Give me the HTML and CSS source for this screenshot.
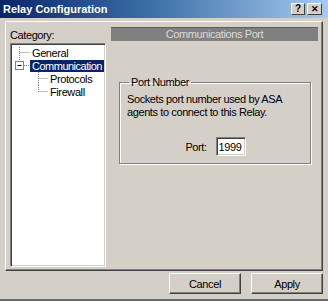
FILE: index.html
```html
<!DOCTYPE html>
<html lang="en">
<head>
  <meta charset="UTF-8" />
  <title>Relay Configuration</title>
  <link rel="stylesheet" href="styles.css">
</head>
<body>
  <div class="window">
    <div class="titlebar">
      <span class="title">Relay Configuration</span>
      <div class="caption-btns">
        <span class="cap-btn">?</span>
        <span class="cap-btn close">✕</span>
      </div>
    </div>

    <div class="panel">
      <div class="sidebar">
        <div class="cat-label">Category:</div>
        <div class="tree">
          <div class="row">
            <svg class="gutter" width="18" height="13">
              <path d="M7.5 1V13M7.5 6.5H18" stroke="#808080" stroke-dasharray="1 1" fill="none"/>
            </svg>
            <span class="node">General</span>
          </div>
          <div class="row">
            <svg class="gutter" width="18" height="13">
              <path d="M7.5 0V2M12 6.5H18" stroke="#808080" stroke-dasharray="1 1" fill="none"/>
              <rect x="3.5" y="2.5" width="8" height="8" fill="#fff" stroke="#808080"/>
              <path d="M5.5 6.5H9.5" stroke="#000"/>
            </svg>
            <span class="node selected">Communication</span>
          </div>
          <div class="row">
            <svg class="gutter" width="36" height="13">
              <path d="M26.5 0V13M26.5 6.5H36" stroke="#808080" stroke-dasharray="1 1" fill="none"/>
            </svg>
            <span class="node">Protocols</span>
          </div>
          <div class="row">
            <svg class="gutter" width="36" height="13">
              <path d="M26.5 0V7M26.5 6.5H36" stroke="#808080" stroke-dasharray="1 1" fill="none"/>
            </svg>
            <span class="node">Firewall</span>
          </div>
        </div>
      </div>

      <div class="content">
        <div class="page-header">Communications Port</div>
        <fieldset class="group">
          <legend>Port Number</legend>
          <p class="desc">Sockets port number used by ASA agents to connect to this Relay.</p>
          <div class="port-row">
            <label for="port">Port:</label>
            <input id="port" type="text" value="1999" />
          </div>
        </fieldset>
      </div>
    </div>

    <div class="footer">
      <button>Cancel</button>
      <button>Apply</button>
    </div>
  </div>
</body>
</html>
```

FILE: styles.css
```css
body {
  margin: 0;
  padding: 0;
  font-family: 'Liberation Sans', Arial, sans-serif;
  font-size: 11px;
  letter-spacing: -0.4px;
  color: #000;
  background: #d4d0c8;
}

.window {
  width: 328px;
  height: 301px;
  box-sizing: border-box;
  display: flex;
  flex-direction: column;
  border-bottom: 2px solid #6a6a6a;
  background: #d4d0c8;
}

.titlebar {
  height: 18px;
  display: flex;
  align-items: center;
  justify-content: space-between;
  padding: 0 6px 0 3px;
  background: linear-gradient(90deg, #0a246a, #3a6ea5 45%, #a6caf0);
}

.title {
  color: #fff;
  font-weight: bold;
  font-size: 11px;
  letter-spacing: 0;
}

.caption-btns {
  display: flex;
  gap: 2px;
}

.cap-btn {
  width: 14px;
  height: 12px;
  box-sizing: border-box;
  background: #d4d0c8;
  border-top: 1px solid #fff;
  border-left: 1px solid #fff;
  border-right: 1px solid #404040;
  border-bottom: 1px solid #404040;
  font-weight: bold;
  font-size: 10px;
  line-height: 10px;
  letter-spacing: 0;
  text-align: center;
}

.cap-btn.close {
  width: 15px;
  font-size: 9px;
}

.panel {
  margin: 3px 5px 0 5px;
  height: 250px;
  box-sizing: border-box;
  display: flex;
  gap: 5px;
  border-top: 1px solid #fff;
  border-left: 1px solid #fff;
  border-right: 1px solid #404040;
  border-bottom: 1px solid #404040;
  box-shadow: inset -1px -1px 0 #808080;
}

.sidebar {
  width: 100px;
  display: flex;
  flex-direction: column;
  padding: 7px 0 3px 4px;
  box-sizing: border-box;
}

.cat-label {
  line-height: 13px;
  margin-bottom: 1px;
}

.tree {
  flex: 1;
  background: #fff;
  border-top: 1px solid #808080;
  border-left: 1px solid #808080;
  border-right: 1px solid #fff;
  border-bottom: 1px solid #fff;
  box-shadow: inset 1px 1px 0 #404040, inset -1px -1px 0 #d4d0c8;
  padding: 2px 0 0 1px;
  overflow: hidden;
}

.row {
  display: flex;
  align-items: center;
  height: 13px;
}

.gutter {
  flex: none;
  display: block;
}

.node {
  padding: 0 2px;
  line-height: 12px;
  white-space: nowrap;
}

.node.selected {
  background: #0a246a;
  color: #fff;
  letter-spacing: -0.5px;
}

.content {
  flex: 1;
  padding: 5px 4px 0 0;
  display: flex;
  flex-direction: column;
}

.page-header {
  height: 13px;
  line-height: 13px;
  background: #808080;
  border-top: 1px solid #5e5e5e;
  color: #dcdad4;
  text-align: center;
}

.group {
  margin: 35px 7px 0 8px;
  padding: 0 6px 7px 7px;
  border: 1px solid #808080;
  box-shadow: 1px 1px 0 #fff, inset 1px 1px 0 #fff;
  min-width: 0;
}

.group legend {
  padding: 0 2px;
  margin-left: 2px;
  line-height: 13px;
}

.desc {
  margin: 4px 0 0 0;
  line-height: 13px;
  width: 170px;
}

.port-row {
  display: flex;
  justify-content: center;
  align-items: center;
  gap: 9px;
  margin-top: 18px;
}

.port-row input {
  width: 30px;
  height: 19px;
  box-sizing: border-box;
  font-family: inherit;
  font-size: 11px;
  letter-spacing: -0.4px;
  padding: 0 2px;
  background: #fff;
  border-top: 1px solid #808080;
  border-left: 1px solid #808080;
  border-right: 1px solid #fff;
  border-bottom: 1px solid #fff;
  box-shadow: inset 1px 1px 0 #404040, inset -1px -1px 0 #d4d0c8;
  outline: none;
}

.footer {
  display: flex;
  justify-content: flex-end;
  gap: 10px;
  padding: 2px 5px 0 0;
}

.footer button {
  width: 72px;
  height: 21px;
  font-family: inherit;
  font-size: 11px;
  letter-spacing: -0.4px;
  color: #000;
  background: #d4d0c8;
  border-top: 1px solid #fff;
  border-left: 1px solid #fff;
  border-right: 1px solid #404040;
  border-bottom: 1px solid #404040;
  box-shadow: inset -1px -1px 0 #808080;
  padding: 0;
}
```
